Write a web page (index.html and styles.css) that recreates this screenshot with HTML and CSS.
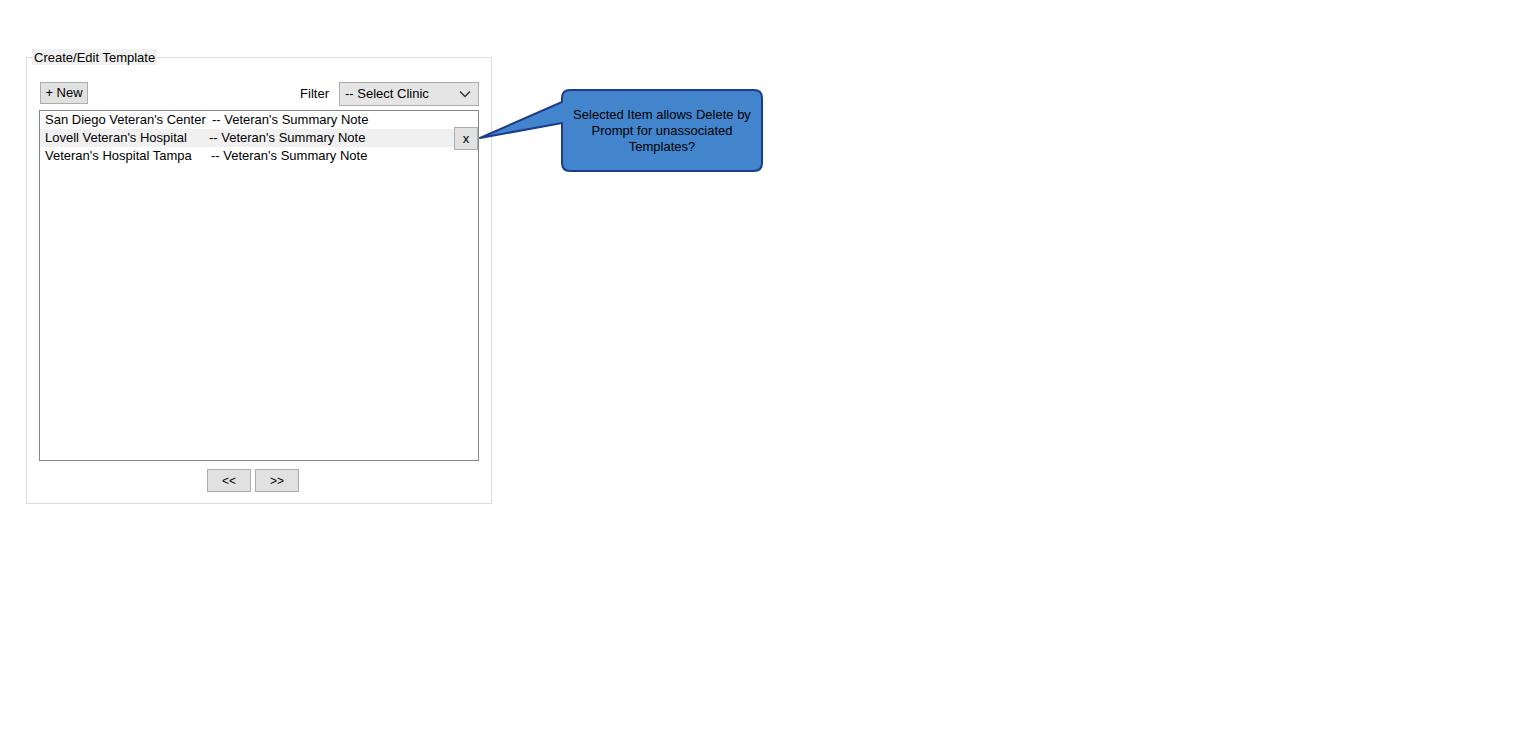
FILE: index.html
```html
<!DOCTYPE html>
<html>
<head>
<meta charset="utf-8">
<link rel="stylesheet" href="styles.css">
</head>
<body>
<div class="page">
  <fieldset class="panel">
    <legend class="panel-title">Create/Edit Template</legend>
    <div class="toolbar">
      <button class="btn btn-new">+ New</button>
      <div class="filter">
        <span class="filter-label">Filter</span>
        <div class="select">
          <span class="select-text">-- Select Clinic</span>
          <svg class="chevron" width="12" height="8" viewBox="0 0 12 8"><path d="M1 1.5 L6 6.5 L11 1.5" fill="none" stroke="#333" stroke-width="1.4"/></svg>
        </div>
      </div>
    </div>
    <div class="listbox">
      <div class="row"><span class="c1">San Diego Veteran's Center</span><span class="c2">-- Veteran's Summary Note</span></div>
      <div class="row selected"><span class="c1 c1b">Lovell Veteran's Hospital</span><span class="c2">-- Veteran's Summary Note</span><button class="btn btn-x">x</button></div>
      <div class="row"><span class="c1 c1c">Veteran's Hospital Tampa</span><span class="c2">-- Veteran's Summary Note</span></div>
    </div>
    <div class="pager">
      <button class="btn btn-page">&lt;&lt;</button>
      <button class="btn btn-page">&gt;&gt;</button>
    </div>
  </fieldset>

  <div class="callout">
    <svg class="callout-shape" width="290" height="90" viewBox="0 0 290 90">
      <path d="M92 2 H276 Q284 2 284 10 V75 Q284 83 276 83 H92 Q84 83 84 75 V35 L2 50 L84 14 V10 Q84 2 92 2 Z" fill="#4285cd" stroke="#1d3d8c" stroke-width="2" stroke-linejoin="round"/>
    </svg>
    <div class="callout-text">Selected Item allows Delete by<br>Prompt for unassociated<br>Templates?</div>
  </div>
</div>
</body>
</html>
```

FILE: styles.css
```css
* { box-sizing: border-box; }
html, body { margin: 0; padding: 0; background: #fff; }
body {
  font-family: "Liberation Sans", Arial, sans-serif;
  font-size: 13px;
  color: #000;
}
.page {
  position: relative;
  padding: 49px 0 0 26px;
  width: 1531px;
  height: 751px;
}
.panel {
  margin: 0;
  width: 466px;
  border: 1px solid #dcdcdc;
  padding: 17px 12px 11px 12px;
}
.panel-title {
  background: #f0f0f0;
  padding: 1px 2px 0 2px;
  margin-left: -7px;
  line-height: 15px;
  height: 16px;
}
.btn {
  font-family: "Liberation Sans", Arial, sans-serif;
  font-size: 13px;
  color: #000;
  background: #e1e1e1;
  border: 1px solid #adadad;
  border-radius: 0;
  padding: 0;
  margin: 0;
  line-height: 20px;
}
.toolbar {
  display: flex;
  justify-content: space-between;
  align-items: flex-start;
  height: 28px;
}
.btn-new {
  margin-left: 1px;
  width: 48px;
  height: 22px;
}
.filter {
  display: flex;
  align-items: center;
  gap: 10px;
  height: 24px;
}
.filter-label { line-height: 24px; }
.select {
  width: 140px;
  height: 24px;
  border: 1px solid #acacac;
  background: #e5e5e5;
  display: flex;
  align-items: center;
  justify-content: space-between;
  padding: 0 7px 0 5px;
}
.select-text { line-height: 22px; }
.chevron { display: block; }
.listbox {
  width: 440px;
  height: 351px;
  border: 1px solid #828790;
}
.row {
  position: relative;
  height: 18px;
  line-height: 18px;
  padding-left: 5px;
  display: flex;
  white-space: pre;
}
.row.selected { background: #f0f0f0; }
.c1 { width: 167px; }
.c1b { width: 164px; }
.c1c { width: 166px; }
.btn-x {
  position: absolute;
  right: 0;
  top: -2px;
  width: 24px;
  height: 23px;
  line-height: 20px;
}
.pager {
  display: flex;
  gap: 4px;
  padding-left: 168px;
  margin-top: 8px;
}
.btn-page {
  width: 44px;
  height: 23px;
  font-size: 12px;
}
.callout {
  position: absolute;
  left: 478px;
  top: 88px;
  width: 290px;
  height: 90px;
}
.callout-shape { position: absolute; left: 0; top: 0; }
.callout-text {
  position: absolute;
  left: 84px;
  top: 19px;
  width: 200px;
  text-align: center;
  font-size: 13px;
  line-height: 16px;
  color: #000;
}
```
